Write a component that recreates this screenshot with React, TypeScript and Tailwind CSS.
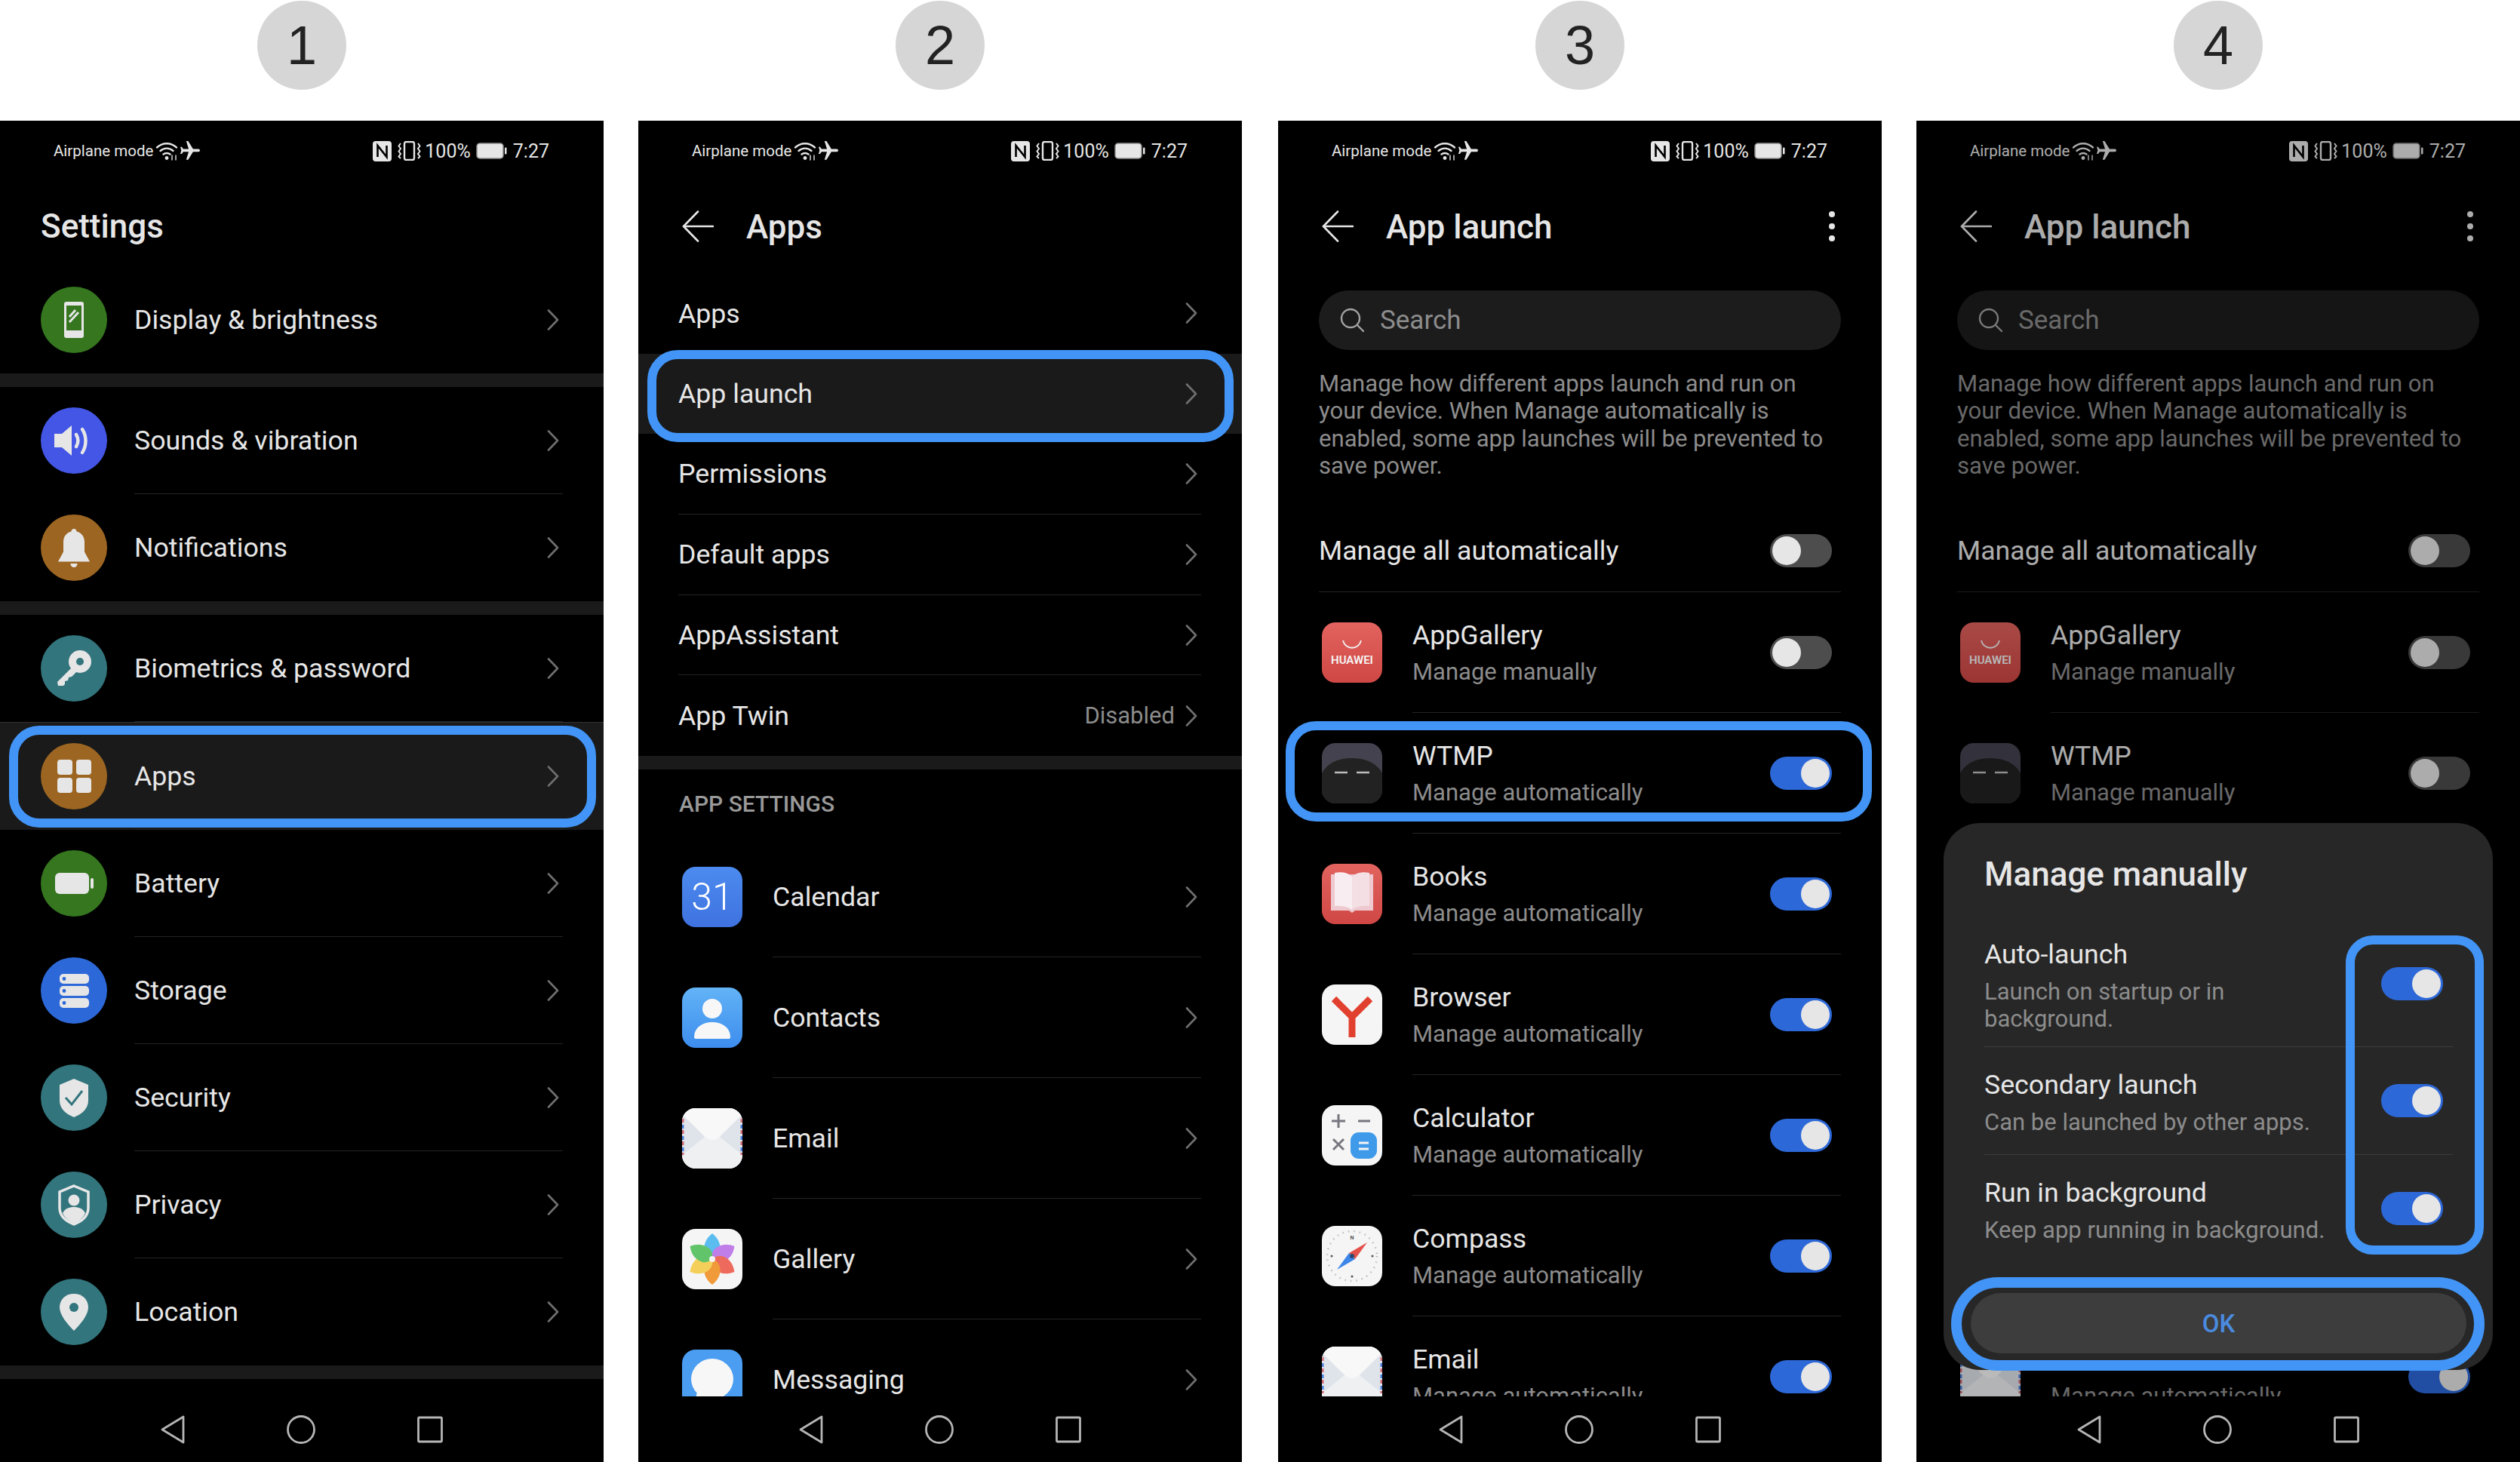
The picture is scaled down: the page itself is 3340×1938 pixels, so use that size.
import type { ReactNode } from "react";

const Chevron = () => (
  <svg width="16" height="28" viewBox="0 0 16 28" fill="none" stroke="#6f6f6f" strokeWidth="2.6" strokeLinecap="round" strokeLinejoin="round">
    <polyline points="2,1.5 14,14 2,26.5" />
  </svg>
);

const BackArrow = () => (
  <svg width="42" height="42" viewBox="0 0 42 42" fill="none" stroke="#e6e6e6" strokeWidth="2.6" strokeLinecap="round" strokeLinejoin="round">
    <polyline points="21,1.5 2,21 21,40.5" />
    <line x1="2" y1="21" x2="41" y2="21" />
  </svg>
);

const StatusBar = () => (
  <div className="h-[80px] shrink-0 flex items-center justify-between pl-[71px] pr-[72px] text-[#e6e6e6]">
    <div className="flex items-center">
      <span className="text-[20.5px] leading-none">Airplane mode</span>
      <svg className="ml-[3px]" width="30" height="26" viewBox="0 0 30 26" fill="none" stroke="#e6e6e6" strokeWidth="2.4" strokeLinecap="round">
        <path d="M2 8.5C9.5 1.5 20.5 1.5 28 8.5" />
        <path d="M6.5 13C11.5 8.5 18.5 8.5 23.5 13" />
        <path d="M10.5 17.5C13 15.5 17 15.5 19.5 17.5" />
        <circle cx="15" cy="22.5" r="2.4" fill="#e6e6e6" stroke="none" />
        <path d="M22 25V19M27 25V19" strokeWidth="1.4" />
      </svg>
      <svg className="ml-[3px]" width="26" height="26" viewBox="2 2 20 20" fill="#e6e6e6">
        <path transform="rotate(90 12 12)" d="M21 16v-2l-8-5V3.5c0-.83-.67-1.5-1.5-1.5S10 2.67 10 3.5V9l-8 5v2l8-2.5V19l-2 1.5V22l3.5-1 3.5 1v-1.5L13 19v-5.5l8 2.5z" />
      </svg>
    </div>
    <div className="flex items-center">
      <svg width="25" height="27" viewBox="0 0 25 27" fill="none">
        <rect x="0" y="0" width="25" height="27" rx="4" fill="#e6e6e6" />
        <path d="M6.5 21V6l12 15V6" stroke="#000" strokeWidth="2.6" />
      </svg>
      <svg className="ml-[8px]" width="31" height="26" viewBox="0 0 31 26" fill="none" stroke="#e6e6e6" strokeWidth="2">
        <rect x="9" y="1" width="13" height="24" rx="2.5" strokeWidth="2.4" />
        <path d="M4 3l-2.5 3.5L4 10l-2.5 3.5L4 17l-2.5 3.5L4 23" />
        <path d="M27 3l2.5 3.5L27 10l2.5 3.5L27 17l2.5 3.5L27 23" />
      </svg>
      <span className="ml-[5px] text-[25px] leading-none">100%</span>
      <svg className="ml-[7px]" width="41" height="22" viewBox="0 0 41 22">
        <rect x="1" y="1" width="35" height="20" rx="4" fill="#e6e6e6" stroke="#8a8a8a" strokeWidth="1.5" />
        <rect x="38" y="6.5" width="2.5" height="9" rx="1" fill="#e6e6e6" />
      </svg>
      <span className="ml-[8px] text-[25px] leading-none">7:27</span>
    </div>
  </div>
);

const NavBar = () => (
  <div className="h-[87px] shrink-0 bg-black relative z-20 flex items-start justify-center gap-[135px] pt-[25px]">
    <svg width="32" height="38" viewBox="0 0 32 38" fill="none" stroke="#b5b5b5" strokeWidth="2.8" strokeLinejoin="round">
      <path d="M30 2v34L2 19z" />
    </svg>
    <svg width="38" height="38" viewBox="0 0 38 38" fill="none" stroke="#b5b5b5" strokeWidth="2.8">
      <circle cx="19" cy="19" r="17.5" />
    </svg>
    <svg width="34" height="38" viewBox="0 0 34 38" fill="none" stroke="#b5b5b5" strokeWidth="2.8" strokeLinejoin="round">
      <rect x="1.5" y="3" width="31" height="32" rx="1.5" />
    </svg>
  </div>
);

const Band = ({ className = "h-[18px]" }: { className?: string }) => <div className={`${className} bg-[#1a1a1a] shrink-0`} />;

const Highlight = ({ className }: { className: string }) => (
  <div className={`absolute border-[12px] border-[#4295f7] z-10 ${className}`} />
);

function Round({ color, children }: { color: string; children: ReactNode }) {
  return (
    <div className={`w-[88px] h-[88px] rounded-full shrink-0 ${color}`}>
      <svg width="88" height="88" viewBox="0 0 88 88" fill="#e6e6e6">
        {children}
      </svg>
    </div>
  );
}

const DisplayIcon = () => (
  <Round color="bg-[#35761f]">
    <rect x="31" y="20" width="26" height="48" rx="3" />
    <rect x="34" y="25" width="20" height="33" fill="#35761f" />
    <path d="M38 40l8-9M38 47l12-13" stroke="#e6e6e6" strokeWidth="3" />
  </Round>
);
const SoundIcon = () => (
  <Round color="bg-[#4356e5]">
    <path d="M18 35h10l13-11v40L28 53H18z" />
    <path d="M47 36c3 5 3 11 0 16M55 29c6 9 6 22 0 31" fill="none" stroke="#e6e6e6" strokeWidth="4.5" strokeLinecap="round" />
  </Round>
);
const BellIcon = () => (
  <Round color="bg-[#9c6522]">
    <path d="M44 19c2 0 3.500 1.500 3.500 3.500 7 1.500 10.500 7.500 10.500 14v13l7 13H23l7-13V36.500c0-6.500 3.500-12.500 10.500-14C40.500 20.500 42 19 44 19z" />
    <path d="M39.500 65h9c0 3-2 5-4.500 5s-4.500-2-4.500-5z" />
  </Round>
);
const KeyIcon = () => (
  <Round color="bg-[#33757d]">
    <circle cx="52" cy="35" r="15" />
    <path d="M42 42L22 62l1 5h7l2-2v-4l4-1 1-4 4-1 10-10z" />
    <circle cx="52" cy="35" r="5" fill="#33757d" />
  </Round>
);
const AppsIcon = () => (
  <Round color="bg-[#9c6522]">
    <rect x="22" y="22" width="20" height="20" rx="4" />
    <rect x="47" y="22" width="20" height="20" rx="4" />
    <rect x="22" y="46" width="20" height="20" rx="4" />
    <rect x="47" y="46" width="20" height="20" rx="4" />
  </Round>
);
const BatteryIcon = () => (
  <Round color="bg-[#35761f]">
    <rect x="19" y="30" width="45" height="28" rx="6" />
    <rect x="66" y="37" width="4" height="14" rx="2" />
  </Round>
);
const StorageIcon = () => (
  <Round color="bg-[#2d68d8]">
    {[22, 38, 54].map((y) => (
      <g key={y}>
        <rect x="25" y={y} width="39" height="13" rx="5" />
        <circle cx="31" cy={y + 6.5} r="2.4" fill="#2d68d8" />
      </g>
    ))}
  </Round>
);
const ShieldIcon = () => (
  <Round color="bg-[#33757d]">
    <path d="M44 19l19 8v21c0 11-9 18-19 22-10-4-19-11-19-22V27z" />
    <path d="M33 44l8 9 14-18" fill="none" stroke="#33757d" strokeWidth="3" />
  </Round>
);
const PrivacyIcon = () => (
  <Round color="bg-[#33757d]">
    <path d="M44 19l19 8v21c0 11-9 18-19 22-10-4-19-11-19-22V27z" fill="none" stroke="#e6e6e6" strokeWidth="3.5" />
    <circle cx="44" cy="38" r="7.5" />
    <path d="M29 55c3-6 9-8 15-8s12 2 15 8c-3 7-9 11-15 14-6-3-12-7-15-14z" />
  </Round>
);
const PinIcon = () => (
  <Round color="bg-[#33757d]">
    <path d="M44 20c11 0 19 7.500 19 18 0 10-10 22-19 31-9-9-19-21-19-31 0-10.500 8-18 19-18z" />
    <circle cx="44" cy="38" r="6" fill="#33757d" />
  </Round>
);

function Tile({ className = "", children }: { className?: string; children?: ReactNode }) {
  return (
    <div className={`w-[80px] h-[80px] rounded-[18px] overflow-hidden shrink-0 flex items-center justify-center ${className}`}>
      {children}
    </div>
  );
}

const CalendarTile = () => (
  <Tile className="bg-gradient-to-b from-[#4c8bef] to-[#3f72e0]">
    <span className="text-[50px] font-light text-white leading-none">31</span>
  </Tile>
);
const ContactsTile = () => (
  <Tile className="bg-gradient-to-b from-[#62b3f6] to-[#3d8cee]">
    <svg width="80" height="80" viewBox="0 0 80 80" fill="#f7f7f7">
      <circle cx="40" cy="28" r="13" />
      <path d="M16 66c0-13 11-20 24-20s24 7 24 20c0 1-1 2-2 2H18c-1 0-2-1-2-2z" />
    </svg>
  </Tile>
);
const EmailTile = () => (
  <Tile className="bg-[#f4f4f4]">
    <svg width="80" height="80" viewBox="0 0 80 80">
      <rect width="80" height="80" fill="#eef0f2" />
      <path d="M0 8L30 38 0 62zM80 8L50 38 80 62z" fill="#dfe3ea" />
      <path d="M0 0h80v8L48 39c-4 4-12 4-16 0L0 8z" fill="#f8f8f8" />
      <path d="M1 14v48M79 14v48" stroke="#cf6b76" strokeWidth="3" strokeDasharray="5 10" />
      <path d="M1 22v40M79 22v40" stroke="#4c7fdb" strokeWidth="3" strokeDasharray="5 10" />
    </svg>
  </Tile>
);
const GalleryTile = () => (
  <Tile className="bg-[#f5f5f5]">
    <svg width="80" height="80" viewBox="0 0 80 80">
      {[
        ["#5bbcf0", 0],
        ["#c07ee8", 60],
        ["#ee6a5c", 120],
        ["#f09a3a", 180],
        ["#f4cf5a", 240],
        ["#62c46a", 300],
      ].map(([c, r]) => (
        <path key={String(r)} d="M40 6c9 7 12 16 10 24-1 5-5 8-10 10-5-2-9-5-10-10-2-8 1-17 10-24z" fill={String(c)} transform={`rotate(${r} 40 40)`} />
      ))}
      <circle cx="40" cy="40" r="4" fill="#f5f5f5" />
    </svg>
  </Tile>
);
const MessagingTile = () => (
  <Tile className="bg-[#4b9df1]">
    <svg width="80" height="80" viewBox="0 0 80 80" fill="#f7f7f7">
      <ellipse cx="40" cy="39" rx="28" ry="27" />
      <path d="M20 56l-3 14 18-6z" />
    </svg>
  </Tile>
);
const AppGalleryTile = () => (
  <Tile className="bg-gradient-to-b from-[#e2635f] to-[#cf4744] flex-col">
    <svg width="28" height="14" viewBox="0 0 28 14" fill="none" stroke="#f2f2f2" strokeWidth="1.8" className="mb-[7px]">
      <path d="M2 2c3 13 21 13 24 0" />
    </svg>
    <span className="text-[15px] font-semibold text-[#f5f5f5] leading-none">HUAWEI</span>
  </Tile>
);
const WtmpTile = () => (
  <Tile className="bg-[#45424f]">
    <svg width="80" height="80" viewBox="0 0 80 80">
      <path d="M0 40C8 25 24 20 40 20s32 5 40 20v40H0z" fill="#222222" />
      <path d="M17 39h17M46 39h17" stroke="#bdbdbd" strokeWidth="2.4" />
    </svg>
  </Tile>
);
const BooksTile = () => (
  <Tile className="bg-gradient-to-b from-[#e2635f] to-[#cf4744]">
    <svg width="80" height="80" viewBox="0 0 80 80">
      <path d="M12 14h56v48H44l-4 3-4-3H12z" fill="#eec9d0" />
      <path d="M17 12c9-2 18 0 23 5v44c-5-4-14-6-23-5z" fill="#f8eef1" />
      <path d="M63 12c-9-2-18 0-23 5v44c5-4 14-6 23-5z" fill="#f3dfe4" />
    </svg>
  </Tile>
);
const BrowserTile = () => (
  <Tile className="bg-[#f5f5f5]">
    <svg width="80" height="80" viewBox="0 0 80 80" fill="none" stroke="#e2402f" strokeWidth="9">
      <path d="M16 19l24 24 24-24M40 41v29" />
    </svg>
  </Tile>
);
const CalculatorTile = () => (
  <Tile className="bg-[#f5f5f5]">
    <svg width="80" height="80" viewBox="0 0 80 80" fill="none" stroke="#77767f" strokeWidth="3">
      <path d="M13 21h18M22 12v18M48 21h16M15 45l14 14M29 45L15 59" />
      <rect x="38" y="36" width="35" height="35" rx="11" fill="#3f9bea" stroke="none" />
      <path d="M49 50h13M49 58h13" stroke="#f5f5f5" />
    </svg>
  </Tile>
);
const CompassTile = () => (
  <Tile className="bg-[#f5f5f5]">
    <svg width="80" height="80" viewBox="0 0 80 80">
      <circle cx="40" cy="40" r="33" fill="none" stroke="#bcbcbc" strokeWidth="2.5" strokeDasharray="1.500 6" />
      <text x="40" y="18" textAnchor="middle" fontSize="7" fontWeight="700" fill="#555">N</text>
      <path d="M60 22L36 36l8 8z" fill="#e4504a" />
      <path d="M20 58l16-22 8 8z" fill="#3d86ea" />
      <circle cx="40" cy="40" r="3" fill="#2b4a70" />
      <circle cx="13" cy="40" r="1.500" fill="#555" />
      <circle cx="67" cy="40" r="1.500" fill="#555" />
      <circle cx="40" cy="67" r="1.500" fill="#555" />
    </svg>
  </Tile>
);

const Toggle = ({ on }: { on: boolean }) => (
  <div className={`w-[82px] h-[44px] rounded-full flex items-center shrink-0 px-[3px] ${on ? "bg-[#2d68d8] justify-end" : "bg-[#4d4d4d] justify-start"}`}>
    <div className="w-[38px] h-[38px] rounded-full bg-[#e6e6e6]" />
  </div>
);

function SettingsRow({ icon, label, last, className = "", children }: { icon: ReactNode; label: string; last?: boolean; className?: string; children?: ReactNode }) {
  return (
    <div className={`relative flex items-center h-[142px] shrink-0 pl-[54px] pr-[54px] ${className}`}>
      {icon}
      <div className={`ml-[36px] flex-1 h-full flex items-center justify-between pr-[5px] ${last ? "" : "border-b border-[#242424]"}`}>
        <span className="text-[35.7px] pt-[2px] text-[#e6e6e6]">{label}</span>
        <Chevron />
      </div>
      {children}
    </div>
  );
}

const SettingsScreen = () => (
  <>
    <div className="h-[113px] shrink-0 pt-[34px] pl-[54px]">
      <h1 className="text-[44px] leading-[52px] font-medium text-[#e6e6e6]">Settings</h1>
    </div>
    <SettingsRow icon={<DisplayIcon />} label="Display & brightness" last />
    <Band />
    <SettingsRow icon={<SoundIcon />} label="Sounds & vibration" />
    <SettingsRow icon={<BellIcon />} label="Notifications" last />
    <Band />
    <SettingsRow icon={<KeyIcon />} label="Biometrics & password" />
    <SettingsRow icon={<AppsIcon />} label="Apps" className="bg-[#1a1a1a] h-[143px] border-t border-[#333]">
      <Highlight className="left-[12px] right-[10px] top-[4px] bottom-[3px] rounded-[40px]" />
    </SettingsRow>
    <SettingsRow icon={<BatteryIcon />} label="Battery" />
    <SettingsRow icon={<StorageIcon />} label="Storage" />
    <SettingsRow icon={<ShieldIcon />} label="Security" />
    <SettingsRow icon={<PrivacyIcon />} label="Privacy" />
    <SettingsRow icon={<PinIcon />} label="Location" last />
    <Band />
  </>
);

function PlainRow({ label, value, last, className = "", children }: { label: string; value?: string; last?: boolean; className?: string; children?: ReactNode }) {
  return (
    <div className={`relative h-[106.7px] shrink-0 pl-[53px] pr-[54px] ${className}`}>
      <div className={`h-full flex items-center justify-between pr-[5px] ${last ? "" : "border-b border-[#242424]"}`}>
        <span className="text-[35.7px] pt-[2px] text-[#e6e6e6]">{label}</span>
        <span className="flex items-center gap-[14px]">
          {value && <span className="text-[31px] text-[#8c8c8c]">{value}</span>}
          <Chevron />
        </span>
      </div>
      {children}
    </div>
  );
}

const TileRow = ({ icon, label }: { icon: ReactNode; label: string }) => (
  <div className="h-[160px] shrink-0 flex items-center pl-[58px] pr-[54px]">
    {icon}
    <div className="ml-[40px] flex-1 h-full flex items-center justify-between pr-[5px] border-b border-[#242424]">
      <span className="text-[35.7px] pt-[2px] text-[#e6e6e6]">{label}</span>
      <Chevron />
    </div>
  </div>
);

const HeaderBar = ({ title, menu }: { title: string; menu?: boolean }) => (
  <div className="h-[120px] shrink-0 flex items-center pl-[58px] pr-[62px]">
    <BackArrow />
    <h1 className="ml-[43px] pt-[2px] flex-1 text-[44px] leading-[52px] font-medium text-[#e6e6e6]">{title}</h1>
    {menu && (
      <div className="flex flex-col gap-[8px]">
        <div className="w-[8px] h-[8px] rounded-full bg-[#e6e6e6]" />
        <div className="w-[8px] h-[8px] rounded-full bg-[#e6e6e6]" />
        <div className="w-[8px] h-[8px] rounded-full bg-[#e6e6e6]" />
      </div>
    )}
  </div>
);

const AppsScreen = () => (
  <>
    <HeaderBar title="Apps" />
    <div className="h-[2px] shrink-0" />
    <PlainRow label="Apps" last />
    <PlainRow label="App launch" className="bg-[#1a1a1a]" last>
      <Highlight className="left-[12px] right-[11px] -top-[5px] -bottom-[11px] rounded-[40px]" />
    </PlainRow>
    <PlainRow label="Permissions" />
    <PlainRow label="Default apps" />
    <PlainRow label="AppAssistant" />
    <PlainRow label="App Twin" value="Disabled" last />
    <Band />
    <div className="h-[89px] shrink-0 flex items-center pl-[54px]">
      <span className="text-[30px] pt-[2px] font-medium text-[#999999]">APP SETTINGS</span>
    </div>
    <TileRow icon={<CalendarTile />} label="Calendar" />
    <TileRow icon={<ContactsTile />} label="Contacts" />
    <TileRow icon={<EmailTile />} label="Email" />
    <TileRow icon={<GalleryTile />} label="Gallery" />
    <TileRow icon={<MessagingTile />} label="Messaging" />
  </>
);

function ToggleRow({ icon, label, sub, on }: { icon: ReactNode; label: string; sub: string; on: boolean }) {
  return (
    <div className="h-[160px] shrink-0 flex items-center pl-[58px] pr-[54px]">
      {icon}
      <div className="ml-[40px] flex-1 h-full flex items-center justify-between pr-[12px] border-b border-[#242424]">
        <div className="pt-[3px]">
          <div className="text-[35.7px] leading-[50px] text-[#e6e6e6]">{label}</div>
          <div className="text-[31px] leading-[48px] text-[#8c8c8c]">{sub}</div>
        </div>
        <Toggle on={on} />
      </div>
    </div>
  );
}

const LaunchScreen = ({ dialog }: { dialog?: boolean }) => (
  <>
    <HeaderBar title="App launch" menu />
    <div className="mt-[25px] mx-[54px] h-[79px] shrink-0 rounded-full bg-[#1c1c1c] flex items-center pl-[28px] gap-[20px]">
      <svg width="33" height="33" viewBox="0 0 33 33" fill="none" stroke="#a3a3a3" strokeWidth="2.4" strokeLinecap="round">
        <circle cx="14" cy="14" r="12" />
        <line x1="23" y1="23" x2="31" y2="31" />
      </svg>
      <span className="text-[35px] pt-[2px] text-[#8c8c8c]">Search</span>
    </div>
    <p className="mt-[27px] mx-[54px] text-[31.1px] leading-[36.3px] text-[#8c8c8c]">
      Manage how different apps launch and run on your device. When Manage automatically is enabled, some app launches will be prevented to save power.
    </p>
    <div className="mt-[40px] mx-[54px] h-[109px] shrink-0 flex items-center justify-between pr-[12px] border-b border-[#242424]">
      <span className="text-[35.7px] pt-[2px] text-[#e6e6e6]">Manage all automatically</span>
      <Toggle on={false} />
    </div>
    <ToggleRow icon={<AppGalleryTile />} label="AppGallery" sub="Manage manually" on={false} />
    <div className="relative shrink-0">
      <ToggleRow icon={<WtmpTile />} label="WTMP" sub={dialog ? "Manage manually" : "Manage automatically"} on={!dialog} />
      {!dialog && <Highlight className="left-[10px] right-[13px] top-[11px] bottom-[16px] rounded-[40px]" />}
    </div>
    <ToggleRow icon={<BooksTile />} label="Books" sub="Manage automatically" on />
    <ToggleRow icon={<BrowserTile />} label="Browser" sub="Manage automatically" on />
    <ToggleRow icon={<CalculatorTile />} label="Calculator" sub="Manage automatically" on />
    <ToggleRow icon={<CompassTile />} label="Compass" sub="Manage automatically" on />
    <ToggleRow icon={<EmailTile />} label="Email" sub="Manage automatically" on />
  </>
);

function DialogRow({ title, sub, className, last }: { title: string; sub: string; className: string; last?: boolean }) {
  return (
    <div className={`flex items-center justify-between pr-[13px] ${className} ${last ? "" : "border-b border-[#3d3d3d]"}`}>
      <div className="max-w-[460px] pt-[2px]">
        <div className="text-[35.7px] leading-[48px] text-[#e6e6e6]">{title}</div>
        <div className="mt-[8px] text-[31px] leading-[36px] text-[#8c8c8c]">{sub}</div>
      </div>
      <Toggle on />
    </div>
  );
}

const ManageDialog = () => (
  <div className="absolute z-10 left-[36px] right-[36px] top-[931px] h-[725px] rounded-[48px] bg-[#272727] pl-[54px] pr-[53px] pt-[44px]">
    <h2 className="text-[44px] leading-[48px] font-medium text-[#e6e6e6]">Manage manually</h2>
    <div className="mt-[32px]">
      <DialogRow title="Auto-launch" sub="Launch on startup or in background." className="h-[173px] pt-[6px]" />
      <DialogRow title="Secondary launch" sub="Can be launched by other apps." className="h-[143px]" />
      <DialogRow title="Run in background" sub="Keep app running in background." className="h-[142px]" last />
    </div>
    <div className="mt-[41px] -ml-[18px] -mr-[18px] h-[80px] rounded-full bg-[#3d3d3d] flex items-center justify-center">
      <span className="text-[33px] pt-[2px] font-medium text-[#4a8be0]">OK</span>
    </div>
    <Highlight className="left-[533px] right-[12px] top-[149px] h-[423px] rounded-[36px]" />
    <Highlight className="left-[10px] right-[11px] top-[602px] h-[124px] rounded-full !border-[14px]" />
  </div>
);

const Phone = ({ step, children, overlay, className = "" }: { step: number; children: ReactNode; overlay?: ReactNode; className?: string }) => (
  <div className={`w-[800px] shrink-0 ${className}`}>
    <div className="h-[160px] flex justify-center pt-px">
      <div className="w-[118px] h-[118px] rounded-full bg-[#d6d6d6] flex items-center justify-center font-['Liberation_Sans',sans-serif] text-[72px] text-[#222222]">
        {step}
      </div>
    </div>
    <div className="relative h-[1778px] bg-black flex flex-col overflow-hidden">
      <StatusBar />
      <div className="flex-1 min-h-0 overflow-hidden flex flex-col">{children}</div>
      <NavBar />
      {overlay}
    </div>
  </div>
);

export default function App() {
  return (
    <div className="w-[3340px] h-[1938px] bg-white flex overflow-hidden font-['Roboto',sans-serif]">
      <Phone step={1}>
        <SettingsScreen />
      </Phone>
      <Phone step={2} className="ml-[46px]">
        <AppsScreen />
      </Phone>
      <Phone step={3} className="ml-[48px]">
        <LaunchScreen />
      </Phone>
      <Phone
        step={4}
        className="ml-[46px]"
        overlay={
          <>
            <div className="absolute left-0 right-0 top-0 bottom-[87px] bg-black/25" />
            <ManageDialog />
          </>
        }
      >
        <LaunchScreen dialog />
      </Phone>
    </div>
  );
}
